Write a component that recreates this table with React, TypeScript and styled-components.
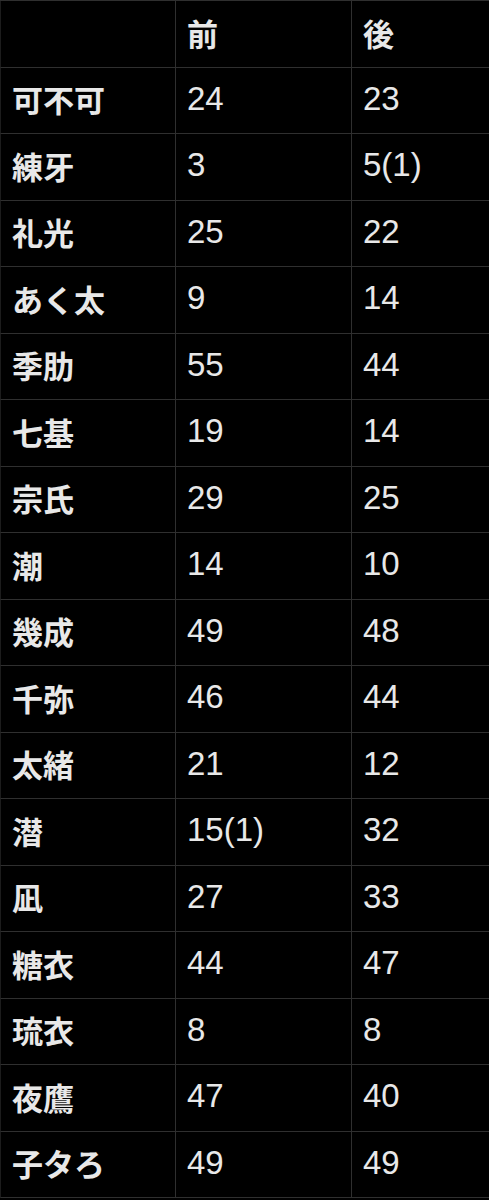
import React from "react";
import styled, { createGlobalStyle } from "styled-components";

const Global = createGlobalStyle`
  html, body { margin: 0; padding: 0; background: #000; }
  body { width: 489px; overflow: hidden; }
`;

const Table = styled.div`
  display: grid;
  grid-template-columns: 175px 176px 1fr;
  grid-auto-rows: 66.5px;
  width: 489px;
  background: #000;
  border-top: 1px solid #2f2f2f;
  box-sizing: border-box;
`;

const Cell = styled.div<{ $col: number; $kind: "name" | "num" }>`
  display: flex;
  align-items: center;
  box-sizing: border-box;
  padding-left: ${(p) => (p.$col === 0 ? 11 : 11)}px;
  padding-bottom: 3px;
  border-bottom: 1px solid #2f2f2f;
  border-left: ${(p) => (p.$col === 0 ? "1px solid #1c1c1c" : "1px solid #2f2f2f")};
  color: #e8e8e8;
  font-family: ${(p) =>
    p.$kind === "name"
      ? '"Noto Sans CJK JP", sans-serif'
      : '"Liberation Sans", "Noto Sans CJK JP", sans-serif'};
  font-weight: ${(p) => (p.$kind === "name" ? 700 : 400)};
  font-size: ${(p) => (p.$kind === "name" ? "31px" : "33px")};
  white-space: nowrap;
`;

const rows: [string, string, string][] = [
  ["可不可", "24", "23"],
  ["練牙", "3", "5(1)"],
  ["礼光", "25", "22"],
  ["あく太", "9", "14"],
  ["季肋", "55", "44"],
  ["七基", "19", "14"],
  ["宗氏", "29", "25"],
  ["潮", "14", "10"],
  ["幾成", "49", "48"],
  ["千弥", "46", "44"],
  ["太緒", "21", "12"],
  ["潜", "15(1)", "32"],
  ["凪", "27", "33"],
  ["糖衣", "44", "47"],
  ["琉衣", "8", "8"],
  ["夜鷹", "47", "40"],
  ["子タろ", "49", "49"],
];

export default function App() {
  return (
    <>
      <Global />
      <Table>
        <Cell $col={0} $kind="name"></Cell>
        <Cell $col={1} $kind="name">前</Cell>
        <Cell $col={2} $kind="name">後</Cell>
        {rows.map(([n, a, b]) => (
          <React.Fragment key={n}>
            <Cell $col={0} $kind="name">{n}</Cell>
            <Cell $col={1} $kind="num">{a}</Cell>
            <Cell $col={2} $kind="num">{b}</Cell>
          </React.Fragment>
        ))}
      </Table>
    </>
  );
}
